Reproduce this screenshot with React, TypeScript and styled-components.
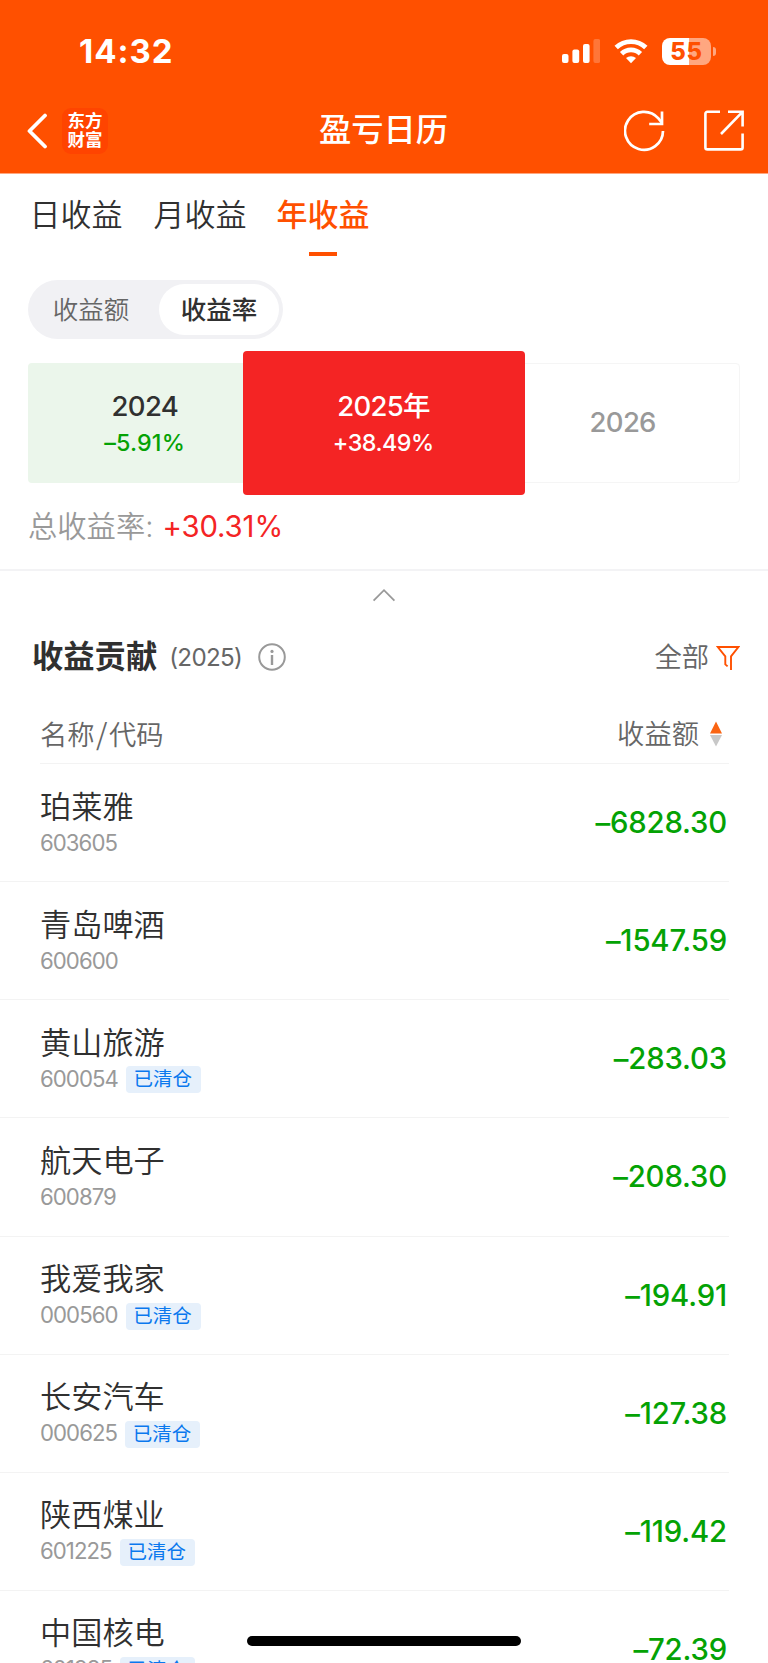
import React from "react";
import styled, { createGlobalStyle, css } from "styled-components";

const ORANGE = "#ff5000";
const GREEN = "#04a204";
const RED = "#f42424";

const GlobalStyle = createGlobalStyle`
  * { box-sizing: border-box; }
  body {
    margin: 0;
    background: #fff;
    color: #303030;
    font-family: Inter, "Noto Sans CJK SC", sans-serif;
    font-weight: 350;
  }
`;

const Screen = styled.div`
  width: 768px;
  height: 1663px;
  overflow: hidden;
  background: #fff;
  display: flex;
  flex-direction: column;

  & > * {
    flex-shrink: 0;
  }
`;

const Header = styled.header`
  height: 173px;
  background: ${ORANGE};
  color: #fff;
  box-shadow: 0 1px 0 #ffa77f;
`;

const StatusBar = styled.div`
  height: 103px;
  padding: 0 52px 0 79px;
  display: flex;
  align-items: center;
  justify-content: space-between;
`;

const Clock = styled.time`
  font-size: 33px;
  font-weight: 700;
  line-height: 40px;
  letter-spacing: 1px;
  padding-bottom: 1px;
`;

const StatusIcons = styled.div`
  display: flex;
  align-items: center;
  gap: 14px;
`;

const Battery = styled.div`
  display: flex;
  align-items: center;
  gap: 1.5px;
`;

const BatteryBody = styled.div`
  width: 49px;
  height: 27px;
  border-radius: 8px;
  background: linear-gradient(to right, #fff 27px, #ffa780 27px);
  color: ${ORANGE};
  font-size: 23.8px;
  font-weight: 800;
  line-height: 27px;
  letter-spacing: 0.8px;
  text-align: center;
`;

const BatteryCap = styled.div`
  width: 3.5px;
  height: 9px;
  border-radius: 0 4px 4px 0;
  background: #ffa780;
`;

const NavBar = styled.nav`
  height: 56px;
  padding: 0 24px 0 27px;
  display: grid;
  grid-template-columns: 1fr auto 1fr;
  align-items: center;
`;

const NavSide = styled.div<{ $end?: boolean }>`
  display: flex;
  align-items: center;
  justify-content: ${(p) => (p.$end ? "flex-end" : "flex-start")};
  gap: ${(p) => (p.$end ? 39.5 : 14)}px;
  padding-bottom: 1px;
`;

const Logo = styled.div`
  width: 46px;
  height: 46px;
  border-radius: 9px;
  background: #ff4400;
  font-size: 17.5px;
  font-weight: 700;
  line-height: 19.5px;
  text-align: center;
  padding-top: 3px;
`;

const NavTitle = styled.h1`
  margin: 0;
  font-size: 32.3px;
  font-weight: 500;
  line-height: 54px;
  padding: 0 4px 2px 0;
`;

const Tabs = styled.div`
  display: flex;
  gap: 31px;
  padding: 21px 0 0 29.5px;
`;

const Tab = styled.div<{ $active?: boolean }>`
  display: flex;
  flex-direction: column;
  align-items: center;
  height: 62px;
  font-size: 31px;
  line-height: 41px;
  font-weight: ${(p) => (p.$active ? 500 : 350)};
  color: ${(p) => (p.$active ? ORANGE : "#303030")};
  ${(p) =>
    p.$active &&
    css`
      margin-left: -1px;

      &::after {
        content: "";
        width: 28px;
        height: 4px;
        margin-top: 17px;
        background: ${ORANGE};
      }
    `}
`;

const Segmented = styled.div`
  display: flex;
  align-self: flex-start;
  width: 255px;
  height: 59px;
  margin: 24px 0 0 28px;
  padding: 4px;
  border-radius: 30px;
  background: #f1f1f4;
`;

const Segment = styled.div<{ $active?: boolean }>`
  width: ${(p) => (p.$active ? 120 : 127)}px;
  padding-right: ${(p) => (p.$active ? 0 : 9)}px;
  border-radius: 26px;
  background: ${(p) => (p.$active ? "#fff" : "transparent")};
  color: ${(p) => (p.$active ? "#303030" : "#666")};
  font-size: 25.5px;
  font-weight: ${(p) => (p.$active ? 500 : 350)};
  line-height: 51px;
  text-align: center;
`;

const Years = styled.div`
  display: grid;
  grid-template-columns: repeat(3, 1fr);
  gap: 4px;
  height: 120px;
  margin: 24px 28px 0;
`;

const YearCard = styled.div<{ $kind: "loss" | "current" | "empty" }>`
  display: flex;
  flex-direction: column;
  align-items: center;
  justify-content: center;
  padding-top: 2px;
  border-radius: 4px;
  ${(p) =>
    p.$kind === "loss" &&
    css`
      background: #ebf6eb;
      color: ${GREEN};
    `}
  ${(p) =>
    p.$kind === "current" &&
    css`
      z-index: 1;
      margin: -12px -23.6px;
      background: ${RED};
      color: #fff;
    `}
  ${(p) =>
    p.$kind === "empty" &&
    css`
      border: 1px solid #f5f5f5;
      margin-left: -30px;
      padding: 0 0 2px 31px;
      color: #999;
    `}
`;

const YearLabel = styled.div<{ $color?: string }>`
  font-size: 27.5px;
  font-weight: 500;
  line-height: 36px;
  letter-spacing: -0.7px;
  padding-right: 1px;
  color: ${(p) => p.$color ?? "inherit"};
`;

const YearRate = styled.div<{ $tight?: boolean }>`
  font-size: 23.3px;
  font-weight: 500;
  line-height: 37px;
  letter-spacing: ${(p) => (p.$tight ? -0.5 : 0.15)}px;
  padding-right: 1.5px;
`;

const Total = styled.div`
  display: flex;
  gap: 9px;
  margin: 24px 0 0 28px;
  font-size: 29.3px;
  line-height: 40px;
  color: #999;
`;

const TotalValue = styled.span`
  color: ${RED};
  font-weight: 400;
  letter-spacing: -0.1px;
`;

const Collapse = styled.div`
  display: flex;
  justify-content: center;
  height: 62px;
  margin-top: 22px;
  padding-top: 17px;
  border-top: 2px solid #f3f3f5;
`;

const SectionHead = styled.div`
  display: flex;
  align-items: center;
  height: 52px;
  padding: 0 28px 0 32px;
`;

const SectionTitle = styled.h2`
  margin: 0;
  font-size: 31.3px;
  font-weight: 700;
  line-height: 52px;
`;

const SectionYear = styled.span`
  margin: 0 16px 0 12px;
  font-size: 24.2px;
  font-weight: 400;
  letter-spacing: -0.7px;
  color: #666;
`;

const Filter = styled.div`
  display: flex;
  align-items: center;
  gap: 7px;
  margin-left: auto;
  font-size: 27.3px;
  line-height: 36px;
  color: #666;
`;

const FilterLabel = styled.span`
  padding-top: 1px;
`;

const TableHead = styled.div`
  display: flex;
  align-items: center;
  justify-content: space-between;
  height: 56px;
  margin: 24px 40px 0;
  padding: 0 6px 2px 0;
  font-size: 27.3px;
  line-height: 36px;
  color: #666;
`;

const Slash = styled.span`
  margin: 0 1.5px;
  font-family: "Noto Sans CJK SC", sans-serif;
  font-size: 29px;
`;

const HeadRule = styled.div`
  height: 1px;
  margin: 0 39px 0 40px;
  background: #f3f3f3;
`;

const SortLabel = styled.div`
  display: flex;
  align-items: center;
  gap: 11px;
`;

const SortText = styled.span`
  padding-top: 2px;
`;

const Row = styled.div`
  display: flex;
  justify-content: space-between;
  height: 118.15px;
  margin-right: 39px;
  padding: 21.5px 2px 0 40px;
  border-bottom: 1px solid #f3f3f3;
`;

const Stock = styled.div`
  display: flex;
  flex-direction: column;
`;

const StockName = styled.div`
  font-size: 31.2px;
  line-height: 42px;
`;

const StockMeta = styled.div`
  display: flex;
  align-items: center;
  gap: 8px;
  height: 32px;
  font-size: 22.2px;
  font-weight: 400;
  letter-spacing: -0.95px;
  color: #999;
`;

const Code = styled.span`
  line-height: 28px;
  padding-bottom: 2px;
`;

const Badge = styled.span`
  width: 75px;
  height: 27px;
  padding-right: 1px;
  border-radius: 4px;
  background: #e6f0fb;
  color: #0a78ee;
  font-size: 19.5px;
  line-height: 27px;
  letter-spacing: 0;
  text-align: center;
`;

const Amount = styled.div`
  padding-top: 16.5px;
  color: ${GREEN};
  font-size: 29.3px;
  font-weight: 500;
  line-height: 42px;
  letter-spacing: -0.15px;
`;

const HomeIndicator = styled.div`
  position: fixed;
  left: 247px;
  top: 1636px;
  width: 274px;
  height: 10px;
  border-radius: 5px;
  background: #000;
`;

const SignalIcon = () => (
  <svg width="38.5" height="25" viewBox="0 0 38.5 25" fill="#fff">
    <rect x="0" y="15" width="6.5" height="9" rx="2" />
    <rect x="10.4" y="10.5" width="6.8" height="13.5" rx="2" />
    <rect x="21" y="5" width="6.6" height="19" rx="2" />
    <rect x="31.4" y="0" width="6.8" height="24" rx="2" opacity="0.22" />
  </svg>
);

const WifiIcon = () => (
  <svg width="34" height="25" viewBox="0 0 34 25" fill="none" stroke="#fff" strokeWidth="4.8">
    <path d="M2.2 8.6a21.3 21.3 0 0 1 29.6 0" />
    <path d="M7.6 14.8a13.4 13.4 0 0 1 18.8 0" />
    <path d="M17 24.2l-5-5.1a7.4 7.4 0 0 1 10 0z" fill="#fff" stroke="none" />
  </svg>
);

const BackIcon = () => (
  <svg width="21" height="36" viewBox="0 0 21 36" fill="none" stroke="#fff" strokeWidth="3.8" strokeLinecap="round" strokeLinejoin="round">
    <path d="M18 2.5L2.5 18 18 33.5" />
  </svg>
);

const RefreshIcon = () => (
  <svg width="41" height="42" viewBox="0 0 41 42" fill="none" stroke="#fff" strokeWidth="2.7">
    <path d="M39 21a19 19 0 1 1-4.6-12.6L38 13" />
    <path d="M38 1.4V14H25.2" />
  </svg>
);

const ShareIcon = () => (
  <svg width="40" height="42" viewBox="0 0 40 42" fill="none" stroke="#fff" strokeWidth="2.6">
    <path d="M16 1.8H3.4a2 2 0 0 0-2 2V37.4a2 2 0 0 0 2 2H36.6a2 2 0 0 0 2-2V23.6" />
    <path d="M24 1.8H38.6V16.6M38 2.4L17 24" />
  </svg>
);

const InfoIcon = () => (
  <svg width="28" height="28" viewBox="0 0 28 28" fill="none" stroke="#999" strokeWidth="2">
    <circle cx="14" cy="14" r="12.8" />
    <path d="M14 12v10" strokeWidth="2.4" />
    <circle cx="14" cy="8.4" r="1.6" fill="#999" stroke="none" />
  </svg>
);

const FilterIcon = () => (
  <svg width="24" height="26" viewBox="0 0 24 26" fill="none" stroke={ORANGE} strokeWidth="1.9">
    <path d="M11.6 22.4L9.3 20.4V12.4L1.8 3H22.4L15 12.4V26" />
  </svg>
);

const SortIcon = () => (
  <svg width="12" height="26" viewBox="0 0 12 26">
    <path d="M6 0.5L12 12.5H0z" fill="#fa6412" />
    <path d="M6 25.5L12 14H0z" fill="#c8c8c8" />
  </svg>
);

const CollapseIcon = () => (
  <svg width="24" height="14" viewBox="0 0 24 14" fill="none" stroke="#999" strokeWidth="1.8">
    <path d="M1.6 12.6L12 2.2 22.4 12.6" />
  </svg>
);

const stocks = [
  { name: "珀莱雅", code: "603605", amount: "–6828.30", closed: false },
  { name: "青岛啤酒", code: "600600", amount: "–1547.59", closed: false },
  { name: "黄山旅游", code: "600054", amount: "–283.03", closed: true },
  { name: "航天电子", code: "600879", amount: "–208.30", closed: false },
  { name: "我爱我家", code: "000560", amount: "–194.91", closed: true },
  { name: "长安汽车", code: "000625", amount: "–127.38", closed: true },
  { name: "陕西煤业", code: "601225", amount: "–119.42", closed: true },
  { name: "中国核电", code: "601985", amount: "–72.39", closed: true },
];

export default function App() {
  return (
    <Screen>
      <GlobalStyle />
      <Header>
        <StatusBar>
          <Clock>14:32</Clock>
          <StatusIcons>
            <SignalIcon />
            <WifiIcon />
            <Battery>
              <BatteryBody>55</BatteryBody>
              <BatteryCap />
            </Battery>
          </StatusIcons>
        </StatusBar>
        <NavBar>
          <NavSide>
            <BackIcon />
            <Logo>
              东方
              <br />
              财富
            </Logo>
          </NavSide>
          <NavTitle>盈亏日历</NavTitle>
          <NavSide $end>
            <RefreshIcon />
            <ShareIcon />
          </NavSide>
        </NavBar>
      </Header>

      <Tabs>
        <Tab>日收益</Tab>
        <Tab>月收益</Tab>
        <Tab $active>年收益</Tab>
      </Tabs>

      <Segmented>
        <Segment>收益额</Segment>
        <Segment $active>收益率</Segment>
      </Segmented>

      <Years>
        <YearCard $kind="loss">
          <YearLabel $color="#303030">2024</YearLabel>
          <YearRate>–5.91%</YearRate>
        </YearCard>
        <YearCard $kind="current">
          <YearLabel>2025年</YearLabel>
          <YearRate $tight>+38.49%</YearRate>
        </YearCard>
        <YearCard $kind="empty">
          <YearLabel>2026</YearLabel>
        </YearCard>
      </Years>

      <Total>
        <span>总收益率:</span>
        <TotalValue>+30.31%</TotalValue>
      </Total>

      <Collapse>
        <CollapseIcon />
      </Collapse>

      <SectionHead>
        <SectionTitle>收益贡献</SectionTitle>
        <SectionYear>(2025)</SectionYear>
        <InfoIcon />
        <Filter>
          <FilterLabel>全部</FilterLabel>
          <FilterIcon />
        </Filter>
      </SectionHead>

      <TableHead>
        <span>
          名称<Slash>/</Slash>代码
        </span>
        <SortLabel>
          <SortText>收益额</SortText>
          <SortIcon />
        </SortLabel>
      </TableHead>
      <HeadRule />

      {stocks.map((s) => (
        <Row key={s.code}>
          <Stock>
            <StockName>{s.name}</StockName>
            <StockMeta>
              <Code>{s.code}</Code>
              {s.closed && <Badge>已清仓</Badge>}
            </StockMeta>
          </Stock>
          <Amount>{s.amount}</Amount>
        </Row>
      ))}

      <HomeIndicator />
    </Screen>
  );
}
